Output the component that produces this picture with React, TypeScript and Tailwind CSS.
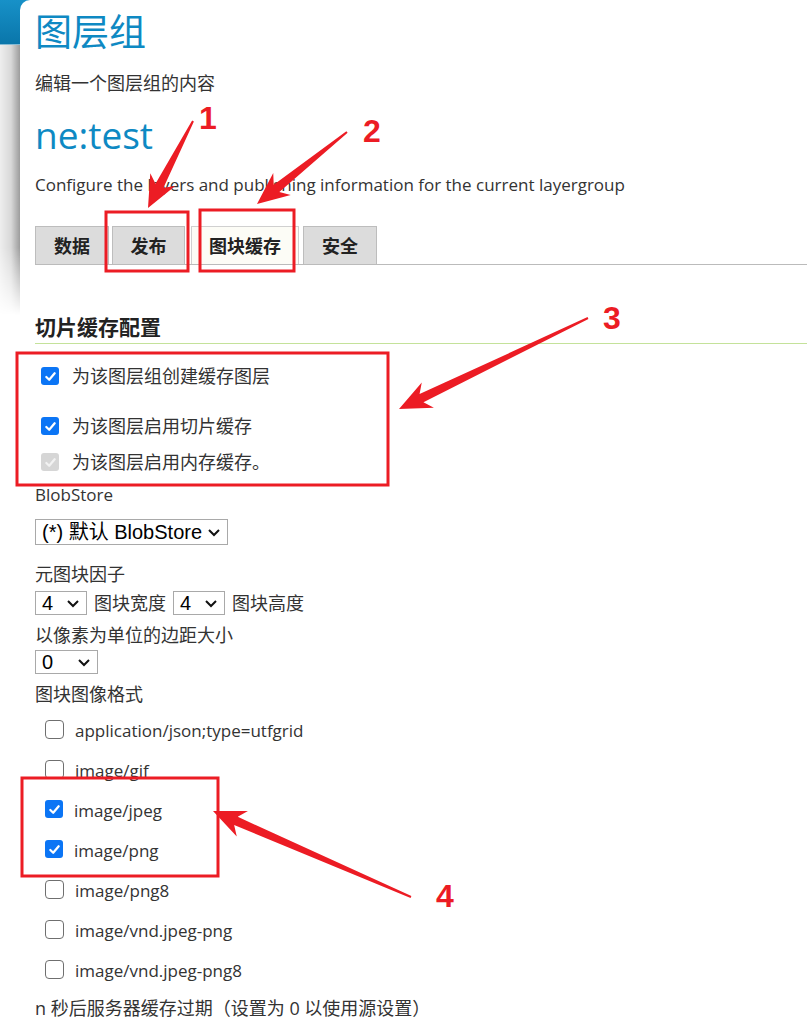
import React from "react";

const body = { fontFamily: '"Open Sans", "Noto Sans CJK SC", sans-serif' };
const arial = { fontFamily: '"Liberation Sans", "Noto Sans CJK SC", sans-serif' };

function Check({ on, disabled }: { on?: boolean; disabled?: boolean }) {
  if (on) {
    return (
      <span
        className={`flex h-[18px] w-[18px] shrink-0 items-center justify-center rounded-[3px] ${
          disabled ? "bg-[#d6d6d6]" : "bg-[#0b75f5]"
        }`}
      >
        <svg width="13" height="13" viewBox="0 0 14 14">
          <path
            d="M2.5 7.5 L5.6 10.5 L11.5 3.5"
            fill="none"
            stroke={disabled ? "#f2f2f2" : "white"}
            strokeWidth="2.4"
            strokeLinecap="round"
            strokeLinejoin="round"
          />
        </svg>
      </span>
    );
  }
  return (
    <span className="block h-[19px] w-[19px] shrink-0 rounded-[4px] border-[1.5px] border-[#6f6f6f] bg-white" />
  );
}

function Select({ value, w, h = "h-[24px]" }: { value: string; w: string; h?: string }) {
  return (
    <div
      className={`flex items-center justify-between border border-[#a9a9a9] bg-white pl-[6px] pr-[6px] text-[20px] text-black ${w} ${h}`}
      style={arial}
    >
      <span className="leading-none">{value}</span>
      <svg width="14" height="14" viewBox="0 0 14 14">
        <path d="M2 5 L7 10 L12 5" fill="none" stroke="#111" strokeWidth="2" />
      </svg>
    </div>
  );
}

function arrow(tx: number, ty: number, hx: number, hy: number) {
  const dx = hx - tx;
  const dy = hy - ty;
  const len = Math.hypot(dx, dy);
  const ux = dx / len;
  const uy = dy / len;
  const nx = -uy;
  const ny = ux;
  const headLen = 32;
  const headW = 28;
  const neck = 9;
  const tail = 2;
  const bx = hx - ux * headLen;
  const by = hy - uy * headLen;
  const cx = hx - ux * (headLen - 7);
  const cy = hy - uy * (headLen - 7);
  const pts = [
    [tx + (nx * tail) / 2, ty + (ny * tail) / 2],
    [cx + (nx * neck) / 2, cy + (ny * neck) / 2],
    [bx + (nx * headW) / 2, by + (ny * headW) / 2],
    [hx, hy],
    [bx - (nx * headW) / 2, by - (ny * headW) / 2],
    [cx - (nx * neck) / 2, cy - (ny * neck) / 2],
    [tx - (nx * tail) / 2, ty - (ny * tail) / 2],
  ];
  return pts.map((p) => p.join(",")).join(" ");
}

const arrows = [
  [193, 121, 148, 208],
  [347, 132, 257, 204],
  [588, 318, 399, 409],
  [411, 897, 213, 811],
];

const boxes = [
  [106, 212, 82, 59],
  [200, 210, 94, 61],
  [17, 353, 371, 132],
  [22, 778, 196, 98],
];

const labels = [
  ["1", 208, 129],
  ["2", 372, 142],
  ["3", 612, 329],
  ["4", 445, 907],
];

const formats: [string, boolean][] = [
  ["application/json;type=utfgrid", false],
  ["image/gif", false],
  ["image/jpeg", true],
  ["image/png", true],
  ["image/png8", false],
  ["image/vnd.jpeg-png", false],
  ["image/vnd.jpeg-png8", false],
];

export default function App() {
  return (
    <div
      className="relative flex min-h-[1018px] overflow-hidden bg-[linear-gradient(to_bottom,#1791c8_0px,#0a76aa_44px,#ffffff_45px)]"
      style={body}
    >
      {/* left strip behind the panel */}
      <div className="w-[20px] shrink-0 pt-[45px]">
        <div className="h-[270px] bg-[linear-gradient(to_right,#eeeeee,#d8d8d8_55%,#9c9c9c)] [mask-image:linear-gradient(to_bottom,black_75%,transparent)]" />
      </div>

      <div className="flex-1 rounded-tl-[10px] bg-white pl-[15px] pt-[9px] text-[18px] leading-[24px] text-[#333]">
        <h1 className="text-[37px] leading-[46px] text-[#0e89c3]">图层组</h1>
        <p className="mt-[16px]">编辑一个图层组的内容</p>
        <h2 className="mt-[17px] text-[37px] leading-[46px] text-[#0e89c3]">ne:test</h2>
        <p className="mt-[15px] text-[17px]">
          Configure the layers and publishing information for the current layergroup
        </p>

        {/* tabs */}
        <div className="mt-[29px] flex h-[39px] items-stretch gap-[3px] border-b border-[#bbbbbb] text-[18px] font-bold text-[#222]">
          <div className="flex w-[74px] items-center justify-center border border-b-0 border-[#bdbdbd] bg-[#dcdcdc]">数据</div>
          <div className="flex w-[73px] items-center justify-center border border-b-0 border-[#bdbdbd] bg-[#dcdcdc]">发布</div>
          <div className="ml-[3px] flex w-[108px] items-center justify-center border border-b-0 border-[#d0d0d0] bg-[#fcfcf6]">图块缓存</div>
          <div className="ml-[1px] flex w-[74px] items-center justify-center border border-b-0 border-[#bdbdbd] bg-[#dcdcdc]">安全</div>
        </div>

        {/* tile cache config */}
        <h3 className="mt-[48px] border-b border-[#c4e29a] pb-[2px] text-[21px] font-bold leading-[28px] text-[#222]">
          切片缓存配置
        </h3>

        <div className="mt-[20px] flex items-center gap-[13px] pl-[6px]">
          <Check on />
          <span>为该图层组创建缓存图层</span>
        </div>
        <div className="mt-[26px] flex items-center gap-[13px] pl-[6px]">
          <Check on />
          <span>为该图层启用切片缓存</span>
        </div>
        <div className="mt-[12px] flex items-center gap-[13px] pl-[6px]">
          <Check on disabled />
          <span>为该图层启用内存缓存。</span>
        </div>

        <p className="mt-[9px] text-[17px]">BlobStore</p>
        <div className="mt-[12px]">
          <Select value="(*) 默认 BlobStore" w="w-[193px]" h="h-[26px]" />
        </div>

        <p className="mt-[17px]">元图块因子</p>
        <div className="mt-[5px] flex items-center gap-[7px]">
          <Select value="4" w="w-[52px]" />
          <span>图块宽度</span>
          <Select value="4" w="w-[52px]" />
          <span>图块高度</span>
        </div>
        <p className="mt-[8px]">以像素为单位的边距大小</p>
        <div className="mt-[3px]">
          <Select value="0" w="w-[63px]" />
        </div>
        <p className="mt-[8px]">图块图像格式</p>

        <div className="mt-[3px] flex flex-col">
          {formats.map(([name, on]) => (
            <div key={name} className="flex h-[40px] items-center gap-[11px] pl-[10px] text-[17px]">
              <Check on={on} />
              <span className="pt-[4px]">{name}</span>
            </div>
          ))}
        </div>

        <p className="mt-[9px] leading-[20px]">n 秒后服务器缓存过期（设置为 0 以使用源设置）</p>
      </div>

      {/* annotation overlay */}
      <svg className="pointer-events-none absolute left-0 top-0" width="807" height="1018">
        {boxes.map(([x, y, w, h], i) => (
          <rect key={i} x={x} y={y} width={w} height={h} fill="none" stroke="#ec1c24" strokeWidth="3" />
        ))}
        {arrows.map(([a, b, c, d], i) => (
          <polygon key={i} points={arrow(a, b, c, d)} fill="#ec1c24" />
        ))}
        {labels.map(([t, x, y]) => (
          <text
            key={t as string}
            x={x as number}
            y={y as number}
            textAnchor="middle"
            fontSize="32"
            fontWeight="bold"
            fill="#ec1c24"
            stroke="white"
            strokeWidth="3"
            paintOrder="stroke"
            style={{ fontFamily: '"Liberation Sans", sans-serif' }}
          >
            {t}
          </text>
        ))}
      </svg>
    </div>
  );
}
